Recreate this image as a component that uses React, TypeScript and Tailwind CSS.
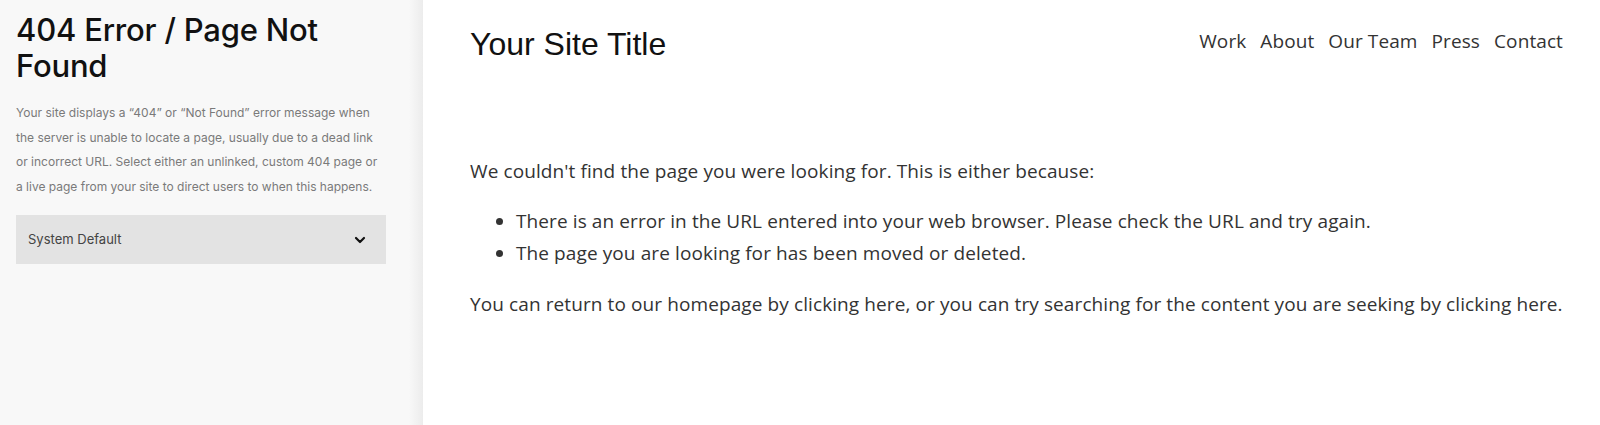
import React from "react";

export default function App() {
  return (
    <div className="flex w-[1600px] h-[425px] bg-white overflow-hidden">
      <aside
        className="relative w-[423px] shrink-0 h-full bg-[#f8f8f8] pl-4 pr-[37px] pt-[12px]"
        style={{ fontFamily: "Inter, 'Liberation Sans', sans-serif" }}
      >
        <div className="absolute right-0 top-0 h-full w-[14px] bg-gradient-to-r from-[#f8f8f8] to-[#ececec]" />
        <h1 className="text-[31px] leading-[36px] font-medium text-[#111] tracking-[-0.2px]">
          404 Error / Page Not Found
        </h1>
        <p className="mt-[17px] text-[12px] leading-[24.5px] text-[#7a7a7a]">
          Your site displays a “404” or “Not Found” error message when the server is unable to locate a page, usually due to a dead link or incorrect URL. Select either an unlinked, custom 404 page or a live page from your site to direct users to when this happens.
        </p>
        <div className="mt-[16px] flex h-[49px] items-center justify-between bg-[#e3e3e3] pl-3 pr-[20px]">
          <span className="text-[13px] text-[#444]">System Default</span>
          <svg width="12" height="8" viewBox="0 0 12 8" fill="none">
            <path d="M2 2l4 4 4-4" stroke="#111" strokeWidth="2.2" strokeLinecap="round" strokeLinejoin="round" />
          </svg>
        </div>
      </aside>
      <main
        className="flex-1 pl-[47px] pr-[37px] text-[#333]"
        style={{ fontFamily: "'Open Sans', Lato, sans-serif" }}
      >
        <header className="flex items-center justify-between pt-[24px]">
          <div
            className="text-[32px] leading-[40px] text-[#111]"
            style={{ fontFamily: "'Liberation Sans', Arial, sans-serif" }}
          >
            Your Site Title
          </div>
          <nav className="flex gap-[14px] text-[19px] tracking-[0.1px] text-[#333] -mt-[6px]">
            <span>Work</span>
            <span>About</span>
            <span>Our Team</span>
            <span>Press</span>
            <span>Contact</span>
          </nav>
        </header>
        <div className="mt-[91px] text-[19px] tracking-[0.1px] leading-[32px]">
          <p>We couldn't find the page you were looking for. This is either because:</p>
          <ul className="mt-[18px] list-disc pl-[46px]">
            <li>There is an error in the URL entered into your web browser. Please check the URL and try again.</li>
            <li>The page you are looking for has been moved or deleted.</li>
          </ul>
          <p className="mt-[19px]">
            You can return to our homepage by clicking here, or you can try searching for the content you are seeking by clicking here.
          </p>
        </div>
      </main>
    </div>
  );
}
